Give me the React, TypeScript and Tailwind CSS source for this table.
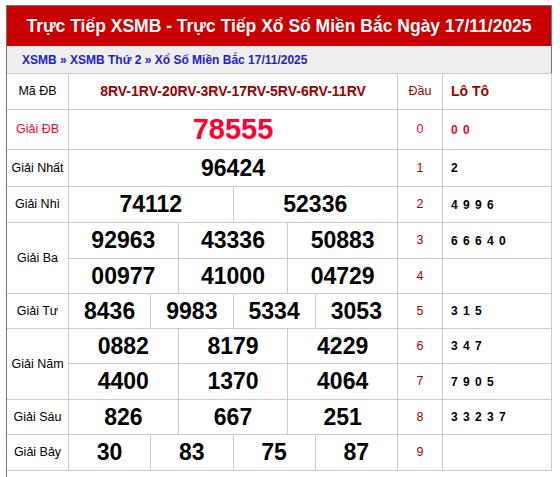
import React from "react";

// prize rows: label, numbers per sub-row
type Prize = { label: string; rows: string[][]; special?: boolean };

const prizes: Prize[] = [
  { label: "Giải ĐB", rows: [["78555"]], special: true },
  { label: "Giải Nhất", rows: [["96424"]] },
  { label: "Giải Nhì", rows: [["74112", "52336"]] },
  { label: "Giải Ba", rows: [["92963", "43336", "50883"], ["00977", "41000", "04729"]] },
  { label: "Giải Tư", rows: [["8436", "9983", "5334", "3053"]] },
  { label: "Giải Năm", rows: [["0882", "8179", "4229"], ["4400", "1370", "4064"]] },
  { label: "Giải Sáu", rows: [["826", "667", "251"]] },
  { label: "Giải Bảy", rows: [["30", "83", "75", "87"]] },
];

const loto = ["0 0", "2", "4 9 9 6", "6 6 6 4 0", "", "3 1 5", "3 4 7", "7 9 0 5", "3 3 2 3 7", ""];

const cell = "flex items-center justify-center border-r border-b border-[#ccc]";

function spanFor(n: number) {
  if (n === 1) return "col-span-12";
  if (n === 2) return "col-span-6";
  if (n === 3) return "col-span-4";
  return "col-span-3";
}

export default function App() {
  let digit = 0;
  const cells: React.ReactNode[] = [];

  // header row
  cells.push(
    <div key="h-label" className={`${cell} text-[12.5px] text-black`}>Mã ĐB</div>,
    <div key="h-code" className={`${cell} col-span-12 text-[14px] font-bold text-[#990000]`}>
      8RV-1RV-20RV-3RV-17RV-5RV-6RV-11RV
    </div>,
    <div key="h-dau" className={`${cell} text-[12.5px] text-[#a00000]`}>Đầu</div>,
    <div key="h-loto" className={`${cell} justify-start pl-[8px] text-[14px] font-bold text-[#a00000]`}>Lô Tô</div>
  );

  prizes.forEach((p) => {
    p.rows.forEach((nums, ri) => {
      if (ri === 0) {
        cells.push(
          <div
            key={`${p.label}-l`}
            className={`${cell} ${p.rows.length === 2 ? "row-span-2" : ""} text-[12.5px] ${p.special ? "text-[#ff0030]" : "text-black"}`}
          >
            {p.label}
          </div>
        );
      }
      nums.forEach((n, ni) => {
        cells.push(
          <div
            key={`${p.label}-${ri}-${ni}`}
            className={`${cell} ${spanFor(nums.length)} font-bold ${p.special ? "text-[29px] text-[#ff0030]" : "text-[23px] text-black"}`}
          >
            {n}
          </div>
        );
      });
      const d = digit++;
      cells.push(
        <div key={`d-${d}`} className={`${cell} text-[12.5px] ${d === 0 ? "text-[#ff0030]" : "text-[#b00000]"}`}>
          {d}
        </div>,
        <div
          key={`l-${d}`}
          className={`${cell} justify-start pl-[8px] text-[12px] font-bold tracking-[1px] whitespace-pre ${d === 0 ? "text-[#ff0030]" : "text-black"}`}
        >
          {loto[d]}
        </div>
      );
    });
  });

  return (
    <div className="min-h-screen bg-white pt-[5px] pl-[6px] font-['Liberation_Sans',Arial,sans-serif]">
      <div className="w-[546px] border-l border-[#777]">
        <div className="flex h-[41px] items-center justify-center border-t border-r border-[#777] bg-[#c80000] text-[17.5px] font-bold text-white">
          Trực Tiếp XSMB - Trực Tiếp Xổ Số Miền Bắc Ngày 17/11/2025
        </div>
        <div className="flex h-[27px] items-center border-r border-[#777] bg-[#eeeeee] pl-[15px] text-[12px] font-bold text-[#2222cc]">
          XSMB » XSMB Thứ 2 » Xổ Số Miền Bắc 17/11/2025
        </div>
        <div className="grid grid-cols-[62px_repeat(12,minmax(0,1fr))_45px_109px] grid-rows-[36px_40px_37px_36px_36px_35px_35px_35px_36px_35px_36px] border-t border-[#ccc]">
          {cells}
        </div>
        <div className="h-[12px]" />
      </div>
    </div>
  );
}
